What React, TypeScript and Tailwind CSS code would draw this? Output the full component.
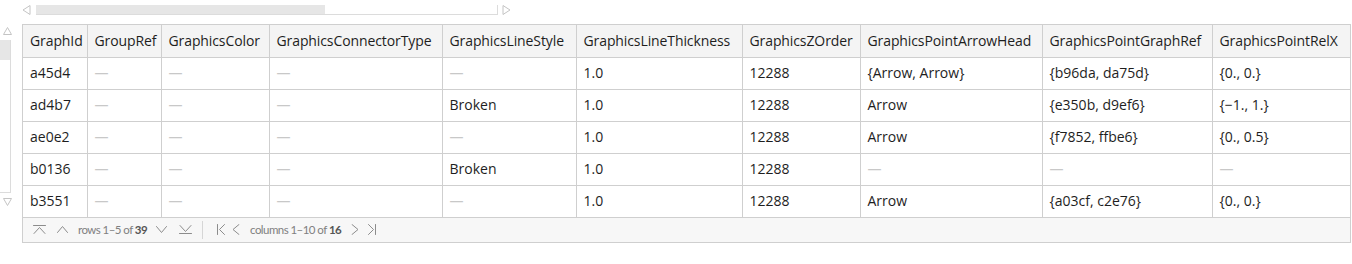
import React from 'react';

const columns = [
  { name: 'GraphId', w: 64 },
  { name: 'GroupRef', w: 74 },
  { name: 'GraphicsColor', w: 108 },
  { name: 'GraphicsConnectorType', w: 173 },
  { name: 'GraphicsLineStyle', w: 134 },
  { name: 'GraphicsLineThickness', w: 166 },
  { name: 'GraphicsZOrder', w: 118 },
  { name: 'GraphicsPointArrowHead', w: 182 },
  { name: 'GraphicsPointGraphRef', w: 170 },
  { name: 'GraphicsPointRelX', w: 138 },
];

const D = null;

const rows: (string | null)[][] = [
  ['a45d4', D, D, D, D, '1.0', '12288', '{Arrow, Arrow}', '{b96da, da75d}', '{0., 0.}'],
  ['ad4b7', D, D, D, 'Broken', '1.0', '12288', 'Arrow', '{e350b, d9ef6}', '{\u22121., 1.}'],
  ['ae0e2', D, D, D, D, '1.0', '12288', 'Arrow', '{f7852, ffbe6}', '{0., 0.5}'],
  ['b0136', D, D, D, 'Broken', '1.0', '12288', D, D, D],
  ['b3551', D, D, D, D, '1.0', '12288', 'Arrow', '{a03cf, c2e76}', '{0., 0.}'],
];

const Icon = ({ d, w, h, className = '' }: { d: string; w: number; h: number; className?: string }) => (
  <svg className={className} width={w} height={h} viewBox={`0 0 ${w} ${h}`} fill="none" stroke="#8c8c8c" strokeWidth="1" strokeLinecap="round" strokeLinejoin="round">
    <path d={d} />
  </svg>
);

export default function App() {
  return (
    <div className="w-[1352px] h-[264px] bg-white text-[#1e1e1e]" style={{ fontFamily: '"Open Sans", "Noto Sans", sans-serif' }}>
      {/* horizontal scrollbar */}
      <div className="flex items-center h-[16px] pt-[3px] pl-[22px]">
        <svg width="9" height="10" viewBox="0 0 9 10" fill="none" stroke="#c4c4c4" strokeWidth="1">
          <path d="M8 0.5 L1 5 L8 9.5 Z" />
        </svg>
        <div className="ml-[5px] w-[462px] h-[10px] flex border-b border-r border-[#dcdcdc]">
          <div className="w-[289px] h-full bg-[#e6e6e6]" />
        </div>
        <svg className="ml-[4px]" width="9" height="10" viewBox="0 0 9 10" fill="none" stroke="#c4c4c4" strokeWidth="1">
          <path d="M1 0.5 L8 5 L1 9.5 Z" />
        </svg>
      </div>

      <div className="flex mt-[8px]">
        {/* vertical scrollbar */}
        <div className="w-[22px] flex flex-col pt-[3px]">
          <svg className="ml-[3px]" width="9" height="8" viewBox="0 0 9 8" fill="none" stroke="#c4c4c4" strokeWidth="1">
            <path d="M0.5 7.5 L4.5 0.5 L8.5 7.5 Z" />
          </svg>
          <div className="mt-[5px] w-[11px] h-[153px] flex flex-col border-r border-b border-[#dcdcdc]">
            <div className="h-[20px] bg-[#e6e6e6]" />
          </div>
          <svg className="ml-[3px] mt-[5px]" width="9" height="8" viewBox="0 0 9 8" fill="none" stroke="#c4c4c4" strokeWidth="1">
            <path d="M0.5 0.5 L4.5 7.5 L8.5 0.5 Z" />
          </svg>
        </div>

        {/* table */}
        <div className="w-[1329px] border border-[#cfcfcf]">
          <table className="w-[1327px] table-fixed border-collapse text-[14px] leading-none">
            <colgroup>
              {columns.map((c) => (
                <col key={c.name} style={{ width: c.w }} />
              ))}
            </colgroup>
            <thead>
              <tr className="h-[32px] bg-[#f4f4f4]">
                {columns.map((c, i) => (
                  <th
                    key={c.name}
                    className={`font-normal text-left pl-[7px] pr-0 whitespace-nowrap overflow-hidden border-b border-[#cfcfcf] tracking-[-0.1px] ${i > 0 ? 'border-l' : ''}`}
                  >
                    {c.name}
                  </th>
                ))}
              </tr>
            </thead>
            <tbody>
              {rows.map((r, ri) => (
                <tr key={ri} className="h-[32px]">
                  {r.map((v, i) => (
                    <td
                      key={i}
                      className={`pl-[7px] pr-0 whitespace-nowrap overflow-hidden border-b border-[#cfcfcf] ${i > 0 ? 'border-l' : ''} ${v === null ? 'text-[#c8c8c8]' : ''}`}
                    >
                      {v === null ? '\u2014' : v}
                    </td>
                  ))}
                </tr>
              ))}
            </tbody>
          </table>

          {/* footer */}
          <div
            className="h-[24px] bg-[#f7f7f7] flex items-center text-[11.5px] text-[#808080] tracking-[-0.55px]"
            style={{ fontFamily: 'Lato, "Open Sans", sans-serif' }}
          >
            <Icon className="ml-[10px]" w={13} h={9} d="M0.5 0.5 H12.5 M1 8.5 L6.5 2.5 L12 8.5" />
            <Icon className="ml-[11px]" w={11} h={7} d="M0.5 6.5 L5.5 0.5 L10.5 6.5" />
            <span className="ml-[10px]">
              rows 1–5 of <b className="font-bold text-[#555]">39</b>
            </span>
            <Icon className="ml-[9px]" w={11} h={7} d="M0.5 0.5 L5.5 6.5 L10.5 0.5" />
            <Icon className="ml-[12px]" w={13} h={9} d="M1 0.5 L6.5 6.5 L12 0.5 M0.5 8.5 H12.5" />
            <div className="ml-[10px] w-px h-[18px] bg-[#d6d6d6]" />
            <Icon className="ml-[14px]" w={8} h={11} d="M0.5 0.5 V10.5 M7.5 0.5 L2.5 5.5 L7.5 10.5" />
            <Icon className="ml-[7px]" w={8} h={11} d="M7 0.5 L1 5.5 L7 10.5" />
            <span className="ml-[10px]">
              columns 1–10 of <b className="font-bold text-[#555]">16</b>
            </span>
            <Icon className="ml-[10px]" w={8} h={11} d="M1 0.5 L7 5.5 L1 10.5" />
            <Icon className="ml-[9px]" w={8} h={11} d="M0.5 0.5 L5.5 5.5 L0.5 10.5 M7.5 0.5 V10.5" />
          </div>
        </div>
      </div>
    </div>
  );
}
